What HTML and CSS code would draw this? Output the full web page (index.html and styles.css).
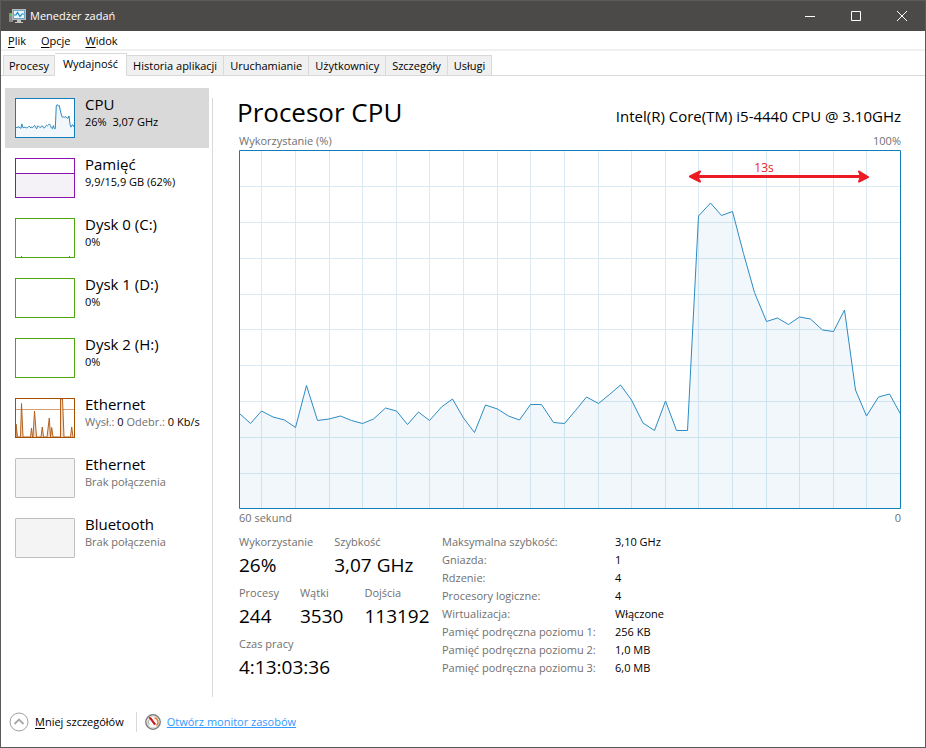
FILE: index.html
```html
<!DOCTYPE html>
<html lang="pl">
<head>
<meta charset="utf-8">
<title>Menedżer zadań</title>
<link rel="stylesheet" href="styles.css">
</head>
<body>
<div class="window">
  <header class="titlebar">
    <svg class="app-icon" width="17" height="16" viewBox="0 0 17 16" aria-hidden="true">
      <rect x="0" y="5" width="4" height="9" fill="#8c8c8a"/>
      <rect x="1" y="6" width="2" height="2" fill="#4fd04f"/>
      <rect x="3" y="1" width="14" height="11" fill="#b9bab8"/>
      <rect x="4" y="2" width="12" height="9" fill="#6aa9cf"/>
      <rect x="5" y="3" width="10" height="7" fill="#e8f6fc"/>
      <path d="M5 7 L7 7 L8.500 4.500 L11 8.500 L13 6 L15 6" fill="none" stroke="#1c88c8" stroke-width="1.200"/>
      <path d="M8 12h4v2h2v1H6v-1h2z" fill="#c4c4c0"/>
    </svg>
    <h1 class="title">Menedżer zadań</h1>
    <div class="window-buttons">
      <button type="button" aria-label="Minimalizuj"><svg width="10" height="10" viewBox="0 0 10 10"><path d="M0 5.500H10"/></svg></button>
      <button type="button" aria-label="Maksymalizuj"><svg width="10" height="10" viewBox="0 0 10 10"><path d="M.5 .5h9v9h-9z"/></svg></button>
      <button type="button" aria-label="Zamknij"><svg width="10" height="10" viewBox="0 0 10 10"><path d="M0 0L10 10M10 0L0 10"/></svg></button>
    </div>
  </header>

  <nav class="menubar">
    <button type="button"><u>P</u>lik</button>
    <button type="button"><u>O</u>pcje</button>
    <button type="button"><u>W</u>idok</button>
  </nav>

  <div class="tabs" role="tablist">
    <button type="button" role="tab">Procesy</button>
    <button type="button" role="tab" class="selected" aria-selected="true">Wydajność</button>
    <button type="button" role="tab">Historia aplikacji</button>
    <button type="button" role="tab">Uruchamianie</button>
    <button type="button" role="tab">Użytkownicy</button>
    <button type="button" role="tab">Szczegóły</button>
    <button type="button" role="tab">Usługi</button>
  </div>

  <div class="content">
    <aside class="sidebar">
      <button type="button" class="item current">
        <svg class="thumb cpu" viewBox="0 0 662 359" preserveAspectRatio="none"><use href="#cpu-history"/></svg>
        <span class="info"><span class="name">CPU</span><span class="detail">26%&nbsp; 3,07 GHz</span></span>
      </button>
      <button type="button" class="item">
        <svg class="thumb memory" viewBox="0 0 58 38"><path d="M0 14.500H58V38H0z" fill="#f4f2f6"/><path d="M0 14.500H58" stroke="#8b12ae"/></svg>
        <span class="info"><span class="name">Pamięć</span><span class="detail">9,9/15,9 GB (62%)</span></span>
      </button>
      <button type="button" class="item">
        <svg class="thumb disk" viewBox="0 0 58 38"><path d="M5.500 37v1M53.500 37v1" stroke="#4da60c"/></svg>
        <span class="info"><span class="name">Dysk 0 (C:)</span><span class="detail">0%</span></span>
      </button>
      <button type="button" class="item">
        <svg class="thumb disk" viewBox="0 0 58 38"></svg>
        <span class="info"><span class="name">Dysk 1 (D:)</span><span class="detail">0%</span></span>
      </button>
      <button type="button" class="item">
        <svg class="thumb disk" viewBox="0 0 58 38"></svg>
        <span class="info"><span class="name">Dysk 2 (H:)</span><span class="detail">0%</span></span>
      </button>
      <button type="button" class="item">
        <svg class="thumb network" viewBox="0 0 58 38">
          <path d="M0 10.500H58" stroke="#d3a077"/>
          <path d="M0 38 V25 L1.500 38 H4.500 L5.500 4.500 L7 38 H14.500 L15.500 29 L16.500 38 H17 L18.500 12 L20.500 38 H25 L26.300 28 L27.500 38 H31 L33.300 19 L34.500 38 L35.700 28.500 L37 38 H44.500 V0 H46.500 L48 38 H54.500 L55.700 28 L57 38" fill="#f0dccb" stroke="#b4601c"/>
        </svg>
        <span class="info"><span class="name">Ethernet</span><span class="detail muted">Wysł.: <b>0</b> Odebr.: <b>0 Kb/s</b></span></span>
      </button>
      <button type="button" class="item">
        <svg class="thumb offline" viewBox="0 0 58 38"></svg>
        <span class="info"><span class="name">Ethernet</span><span class="detail muted">Brak połączenia</span></span>
      </button>
      <button type="button" class="item">
        <svg class="thumb offline" viewBox="0 0 58 38"></svg>
        <span class="info"><span class="name">Bluetooth</span><span class="detail muted">Brak połączenia</span></span>
      </button>
    </aside>

    <main class="panel">
      <div class="heading">
        <h2>Procesor CPU</h2>
        <span class="model">Intel(R) Core(TM) i5-4440 CPU @ 3.10GHz</span>
      </div>
      <div class="scale"><span>Wykorzystanie (%)</span><span>100%</span></div>
      <svg class="chart" viewBox="0 0 662 359" preserveAspectRatio="none" role="img" aria-label="Wykorzystanie procesora">
        <defs>
          <g id="cpu-history">
            <path class="area" d="M0 359 L0 263 L11.500 273.500 L22.500 261 L34 267 L45.500 270 L56.500 277.500 L67.500 235.500 L78.500 270.500 L90 269 L101.500 266 L112.500 270.500 L123.500 273.500 L134.500 269 L146.500 258 L157.500 261 L168.500 274.500 L179.500 262 L190.500 270.500 L202.500 257 L213.500 249 L224.500 268 L235.500 282.500 L246.500 255 L258.500 259 L269.500 266 L280.500 270 L291.500 254.500 L302.500 254.500 L314.500 272.500 L325.500 273.500 L336.500 260.500 L347.500 247 L359.500 253.500 L370.500 244.500 L381.500 235 L392.500 250 L404 273 L415.500 280.500 L426.500 251 L437.500 280.500 L448.500 280.500 L459.500 66 L471.500 53 L482.500 65.500 L493.500 61.500 L504.500 103.500 L515.500 142.500 L527.500 171.500 L538.500 168 L549.500 174.500 L560.500 167 L571.500 169 L583.500 180 L594.500 181.500 L605.500 160 L616.500 240 L627.500 266 L639.500 247 L650.500 244 L661.500 264 L662 359 Z"/>
            <path class="trace" d="M0 263 L11.500 273.500 L22.500 261 L34 267 L45.500 270 L56.500 277.500 L67.500 235.500 L78.500 270.500 L90 269 L101.500 266 L112.500 270.500 L123.500 273.500 L134.500 269 L146.500 258 L157.500 261 L168.500 274.500 L179.500 262 L190.500 270.500 L202.500 257 L213.500 249 L224.500 268 L235.500 282.500 L246.500 255 L258.500 259 L269.500 266 L280.500 270 L291.500 254.500 L302.500 254.500 L314.500 272.500 L325.500 273.500 L336.500 260.500 L347.500 247 L359.500 253.500 L370.500 244.500 L381.500 235 L392.500 250 L404 273 L415.500 280.500 L426.500 251 L437.500 280.500 L448.500 280.500 L459.500 66 L471.500 53 L482.500 65.500 L493.500 61.500 L504.500 103.500 L515.500 142.500 L527.500 171.500 L538.500 168 L549.500 174.500 L560.500 167 L571.500 169 L583.500 180 L594.500 181.500 L605.500 160 L616.500 240 L627.500 266 L639.500 247 L650.500 244 L661.500 264"/>
          </g>
        </defs>
        <path class="grid" d="M22.500 0V359M56.500 0V359M90.500 0V359M123.500 0V359M157.500 0V359M190.500 0V359M224.500 0V359M258.500 0V359M291.500 0V359M325.500 0V359M359.500 0V359M392.500 0V359M426.500 0V359M459.500 0V359M493.500 0V359M527.500 0V359M560.500 0V359M594.500 0V359M627.500 0V359M0 36.500H661M0 72.500H661M0 108.500H661M0 144.500H661M0 179.500H661M0 215.500H661M0 251.500H661M0 287.500H661M0 323.500H661"/>
        <use href="#cpu-history"/>
        <rect class="frame" x=".5" y=".5" width="661" height="358"/>
        <path class="span-line" d="M453 26.500H627"/>
        <path class="span-tip" d="M461 21.500 L451 26.500 L461 31.500 L458 26.500 Z M620 21.500 L629 27 L620 31.500 L622 26.500 Z"/>
        <text class="span-label" x="525" y="22" text-anchor="middle">13s</text>
      </svg>
      <div class="scale"><span>60 sekund</span><span>0</span></div>

      <div class="stats">
        <div class="live">
          <dl class="row">
            <div><dt>Wykorzystanie</dt><dd>26%</dd></div>
            <div><dt>Szybkość</dt><dd>3,07 GHz</dd></div>
          </dl>
          <dl class="row">
            <div><dt>Procesy</dt><dd>244</dd></div>
            <div><dt>Wątki</dt><dd>3530</dd></div>
            <div><dt>Dojścia</dt><dd>113192</dd></div>
          </dl>
          <dl class="row">
            <div><dt>Czas pracy</dt><dd>4:13:03:36</dd></div>
          </dl>
        </div>
        <table class="specs">
          <tr><th scope="row">Maksymalna szybkość:</th><td>3,10 GHz</td></tr>
          <tr><th scope="row">Gniazda:</th><td>1</td></tr>
          <tr><th scope="row">Rdzenie:</th><td>4</td></tr>
          <tr><th scope="row">Procesory logiczne:</th><td>4</td></tr>
          <tr><th scope="row">Wirtualizacja:</th><td>Włączone</td></tr>
          <tr><th scope="row">Pamięć podręczna poziomu 1:</th><td>256 KB</td></tr>
          <tr><th scope="row">Pamięć podręczna poziomu 2:</th><td>1,0 MB</td></tr>
          <tr><th scope="row">Pamięć podręczna poziomu 3:</th><td>6,0 MB</td></tr>
        </table>
      </div>
    </main>
  </div>

  <footer class="footer">
    <button type="button" class="toggle">
      <svg width="20" height="20" viewBox="0 0 20 20" fill="none" aria-hidden="true"><circle cx="10" cy="10" r="9" stroke="#a0a0a0"/><path d="M5.500 12L10 7.500L14.500 12" stroke="#a8a8a8" stroke-width="1.800"/></svg>
      <span><u>M</u>niej szczegółów</span>
    </button>
    <a class="monitor" href="#">
      <svg width="16" height="16" viewBox="0 0 16 16" fill="none" aria-hidden="true"><circle cx="8" cy="8" r="7.200" fill="#f8f8f6" stroke="#7d7d7b" stroke-width="1.500"/><circle cx="8" cy="8" r="5.900" stroke="#d6d6d2"/><path d="M4 10.500A5 5 0 0 1 4.500 5" stroke="#a9a9a9"/><path d="M9.500 3.800A4.500 4.500 0 0 1 11.500 11.500" stroke="#e98132" stroke-width="1.400"/><path d="M4 3.500L6 3.800L10.500 10L9.500 11Z" fill="#c5161d" stroke="#c5161d" stroke-width=".8"/></svg>
      <span>Otwórz monitor zasobów</span>
    </a>
  </footer>
</div>
</body>
</html>
```
FILE: styles.css
```css
* { box-sizing: border-box; }

body {
  margin: 0;
  font: 11px/18px "Open Sans", "Noto Sans", sans-serif;
  color: #000;
  background: #fff;
}

button {
  margin: 0;
  padding: 0;
  border: 0;
  background: none;
  font: inherit;
  color: inherit;
  text-align: left;
}

h1, h2, dl, dd { margin: 0; font-weight: 400; }

.window {
  display: flex;
  flex-direction: column;
  min-height: 100vh;
  border: 1px solid #5b5b59;
}

.titlebar {
  display: flex;
  align-items: center;
  height: 30px;
  padding-left: 8px;
  background: #4c4a48;
  color: #fff;
}
.title { margin-left: 4px; font-size: 11px; }
.window-buttons { display: flex; margin-left: auto; }
.window-buttons button {
  display: grid;
  place-items: center;
  width: 46px;
  height: 30px;
}
.window-buttons svg { fill: none; stroke: #fff; }

.menubar {
  display: flex;
  gap: 15px;
  height: 20px;
  padding: 1px 7px 0;
  border-bottom: 2px solid #f0f0f0;
}
u { text-underline-offset: 2px; }

.tabs {
  display: flex;
  align-items: flex-end;
  height: 25px;
  padding-left: 2px;
  border-bottom: 1px solid #d9d9d9;
}
.tabs button {
  height: 21px;
  margin-bottom: -1px;
  padding: 0 5px;
  border: 1px solid #d9d9d9;
  background: #f0f0f0;
}
.tabs button + button { padding: 0 6px; border-left: 0; }
.tabs button.selected {
  height: 23px;
  padding: 0 8px 2px;
  border-bottom-color: #fff;
  background: #fff;
}

.content { display: flex; flex: 1; padding: 12px 24px 0 4px; }

.sidebar { flex: none; width: 204px; }
.item {
  display: flex;
  gap: 10px;
  width: 100%;
  height: 60px;
  padding: 7px 0 0 10px;
  white-space: nowrap;
}
.current { background: #d9d9d9; }
.info { display: flex; flex-direction: column; }
.name { font-size: 15px; line-height: 18px; }
.detail { line-height: 18px; }
.muted { color: #707070; }
.muted b { font-weight: 400; color: #000; }

.thumb {
  flex: none;
  width: 60px;
  height: 40px;
  margin-top: 3px;
  border: 1px solid;
  background: #fff;
  fill: none;
}
.cpu { border-color: #117dbb; }
.memory { border-color: #8b12ae; }
.disk { border-color: #4da60c; }
.network { border-color: #a74f01; }
.offline { border-color: #bfbfbf; border-radius: 1px; background: #f4f4f4; }

.panel {
  flex: 1;
  min-width: 0;
  margin: 10px 0 0 3px;
  padding-left: 26px;
  border-left: 1px solid #d9d9d9;
}
.heading {
  display: flex;
  align-items: baseline;
  justify-content: space-between;
  height: 34px;
  margin: 0 0 0 -2px;
}
.heading h2 { font-size: 26px; line-height: 28px; }
.model { font-size: 15px; }
.scale {
  display: flex;
  justify-content: space-between;
  color: #707070;
}

.chart { display: block; width: 100%; height: auto; aspect-ratio: 662 / 359; }
.chart path, .chart rect, .trace { vector-effect: non-scaling-stroke; }
.grid { fill: none; stroke: #d9eaf4; }
.area { fill: #117dbb; fill-opacity: .06; stroke: none; }
.trace { fill: none; stroke: #2c8cc3; }
.frame { fill: none; stroke: #117dbb; }
.span-line { stroke: #ed1c24; stroke-width: 3; }
.span-tip { fill: #ed1c24; stroke: #ed1c24; stroke-width: 2; stroke-linejoin: round; }
.span-label { fill: #ed1c24; font-size: 12px; }

.stats { display: flex; margin-top: 6px; }
.live { width: 203px; }
.row { display: flex; gap: 21px; height: 51px; white-space: nowrap; }
dt, .specs th { color: #707070; font-weight: 400; text-align: left; }
dd { font-size: 19px; line-height: 28px; }
.specs { border-collapse: collapse; align-self: flex-start; white-space: nowrap; }
.specs th, .specs td { padding: 0; }
.specs th { width: 173px; }

.footer { display: flex; align-items: center; height: 50px; padding: 0 8px; }
.toggle {
  display: flex;
  align-items: center;
  gap: 6px;
  padding-right: 12px;
  border-right: 1px solid #d9d9d9;
}
.monitor { display: flex; align-items: center; gap: 6px; padding-left: 8px; color: #3399ff; }
```
